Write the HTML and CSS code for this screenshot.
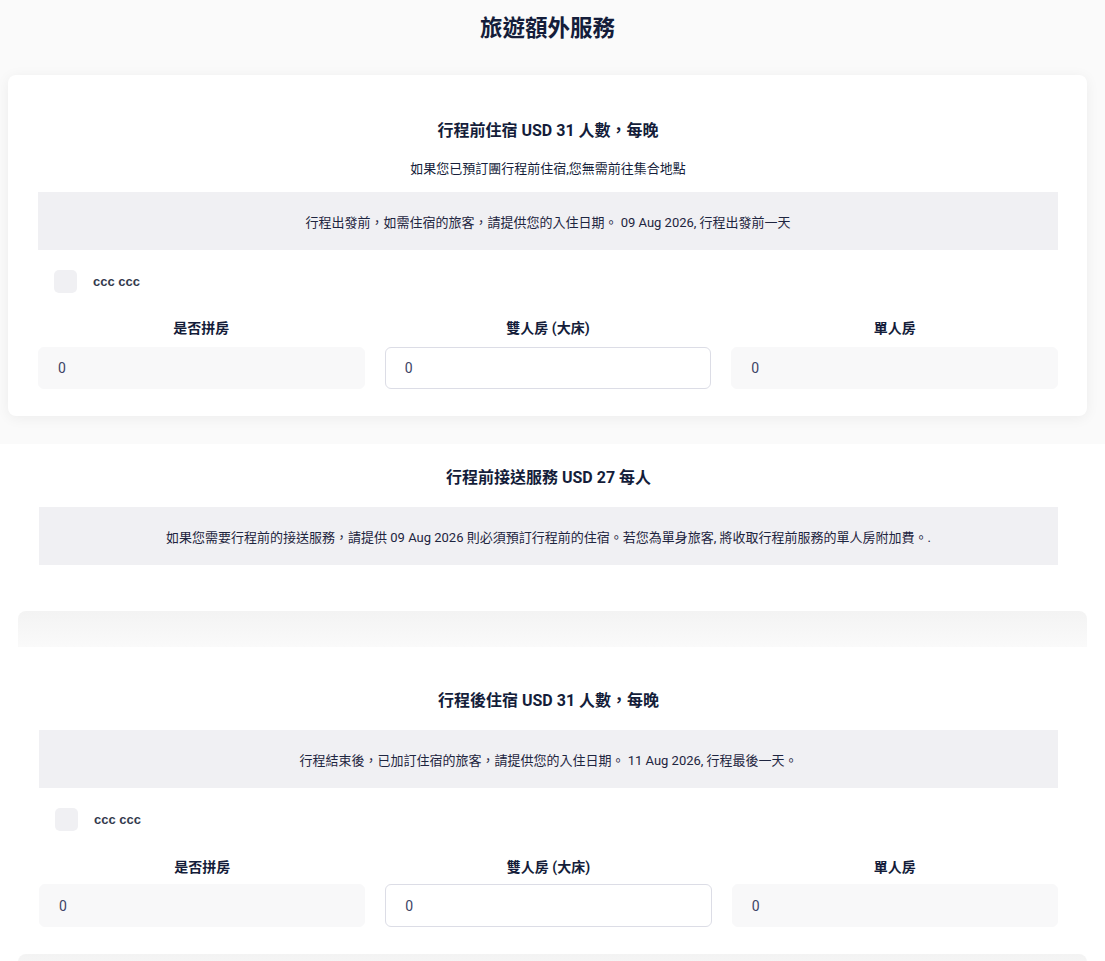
FILE: index.html
```html
<!DOCTYPE html>
<html>
<head>
  <title>旅遊額外服務</title>
  <meta charset="UTF-8">
  <meta name="viewport" content="width=device-width, initial-scale=1.0">
  <link rel="stylesheet" href="styles.css">
</head>
<body>
  <h1 class="page-title">旅遊額外服務</h1>

  <!-- 行程前住宿 -->
  <div class="card card-pre">
    <h2 class="section-title">行程前住宿 USD 31 人數，每晚</h2>
    <p class="section-sub">如果您已預訂團行程前住宿,您無需前往集合地點</p>
    <div class="notice">行程出發前，如需住宿的旅客，請提供您的入住日期。 09 Aug 2026, 行程出發前一天</div>
    <label class="traveler">
      <input type="checkbox" class="check">
      <span>ccc ccc</span>
    </label>
    <div class="rooms">
      <div class="room">
        <div class="room-label">是否拼房</div>
        <input type="text" class="room-input filled" value="0" readonly>
      </div>
      <div class="room">
        <div class="room-label">雙人房 (大床)</div>
        <input type="text" class="room-input" value="0" readonly>
      </div>
      <div class="room">
        <div class="room-label">單人房</div>
        <input type="text" class="room-input filled" value="0" readonly>
      </div>
    </div>
  </div>

  <div class="lower">
    <!-- 行程前接送 -->
    <div class="block">
      <h2 class="section-title">行程前接送服務 USD 27 每人</h2>
      <div class="notice">如果您需要行程前的接送服務，請提供 09 Aug 2026 則必須預訂行程前的住宿。若您為單身旅客, 將收取行程前服務的單人房附加費。.</div>
    </div>

    <div class="divider"></div>

    <!-- 行程後住宿 -->
    <div class="block block-post">
      <h2 class="section-title">行程後住宿 USD 31 人數，每晚</h2>
      <div class="notice">行程結束後，已加訂住宿的旅客，請提供您的入住日期。 11 Aug 2026, 行程最後一天。</div>
      <label class="traveler">
        <input type="checkbox" class="check">
        <span>ccc ccc</span>
      </label>
      <div class="rooms">
        <div class="room">
          <div class="room-label">是否拼房</div>
          <input type="text" class="room-input filled" value="0" readonly>
        </div>
        <div class="room">
          <div class="room-label">雙人房 (大床)</div>
          <input type="text" class="room-input" value="0" readonly>
        </div>
        <div class="room">
          <div class="room-label">單人房</div>
          <input type="text" class="room-input filled" value="0" readonly>
        </div>
      </div>
    </div>

    <div class="divider"></div>
  </div>
</body>
</html>
```

FILE: styles.css
```css
body {
  margin: 0;
  font-family: Roboto, "Noto Sans CJK TC", sans-serif;
  color: #141d3a;
  background-color: #fafafa;
}
.page-title {
  margin: 0;
  padding: 13px 10px 0 0;
  height: 61px;
  box-sizing: border-box;
  font-size: 22.5px;
  line-height: 30px;
  font-weight: 700;
  text-align: center;
}
.card {
  background-color: #fff;
  border-radius: 8px;
  box-shadow: 0 2px 14px rgba(0,0,0,0.06);
}
.card-pre {
  margin: 14px 18px 28px 8px;
  padding: 45px 29px 27px 30px;
}
.section-title {
  margin: 0;
  font-size: 16px;
  line-height: 22px;
  font-weight: 700;
  text-align: center;
}
.section-sub {
  margin: 17px 0 13px;
  font-size: 13px;
  line-height: 20px;
  text-align: center;
}
.notice {
  background-color: #f0f0f3;
  height: 58px;
  display: flex;
  align-items: center;
  justify-content: center;
  font-size: 13px;
  color: #1e2540;
}
.traveler {
  display: flex;
  align-items: center;
  gap: 16px;
  margin: 20px 0 0 16px;
  font-family: "Liberation Sans", Arial, sans-serif;
  font-size: 13px;
  font-weight: 700;
  color: #333a4d;
}
.check {
  appearance: none;
  -webkit-appearance: none;
  margin: 0;
  width: 23px;
  height: 23px;
  border-radius: 5px;
  background-color: #f0f0f3;
}
.rooms {
  display: grid;
  grid-template-columns: repeat(3, 1fr);
  gap: 20px;
  margin-top: 25px;
}
.room-label {
  font-size: 14px;
  line-height: 20px;
  font-weight: 700;
  text-align: center;
  margin-bottom: 9px;
}
.room-input {
  display: block;
  width: 100%;
  box-sizing: border-box;
  height: 42px;
  padding: 0 19px;
  border: 1px solid #dcdde6;
  border-radius: 6px;
  background-color: #fff;
  font-family: Roboto, sans-serif;
  font-size: 14px;
  color: #3d4466;
  outline: none;
}
.room-input.filled {
  border-color: #f8f8f9;
  background-color: #f8f8f9;
}
.lower {
  background-color: #fff;
  padding: 23px 18px 0;
}
.block {
  padding: 0 29px 46px 21px;
}
.block .section-title {
  margin-bottom: 18px;
}
.block-post {
  padding-top: 43px;
  padding-bottom: 27px;
}
.block-post .rooms {
  margin-top: 26px;
}
.block-post .room-label {
  margin-bottom: 7px;
}
.block-post .room-input {
  height: 43px;
}
.divider {
  height: 36px;
  border-radius: 8px 8px 0 0;
  background: linear-gradient(#f3f3f3, #fafafa);
}
```
